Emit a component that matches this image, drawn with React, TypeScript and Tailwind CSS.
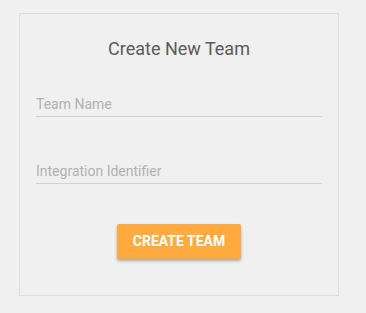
import React, { useState } from 'react';

const App: React.FC = () => {
  const [name, setName] = useState('');
  const [ident, setIdent] = useState('');

  return (
    <div className="h-[313px] w-[366px] bg-[#f0f0f0] pl-[19px] pt-[13px] font-['Roboto',sans-serif]">
      <div className="flex h-[283px] w-[320px] flex-col border border-[#dcdcdc] px-4 pt-[23px]">
        <h2 className="text-center text-[18px] leading-6 text-[#5a5a5a]">Create New Team</h2>
        <input
          value={name}
          onChange={(e) => setName(e.target.value)}
          placeholder="Team Name"
          className="mt-[33px] h-[23px] w-full border-b border-[#d2d2d2] bg-transparent pb-[3px] text-[14px] leading-5 text-[#444] outline-none placeholder:text-[#b0b0b0]"
        />
        <input
          value={ident}
          onChange={(e) => setIdent(e.target.value)}
          placeholder="Integration Identifier"
          className="mt-[44px] h-[23px] w-full border-b border-[#d2d2d2] bg-transparent pb-[3px] text-[14px] leading-5 text-[#444] outline-none placeholder:text-[#b0b0b0]"
        />
        <div className="mt-[40px] flex justify-center">
          <button className="h-[35px] w-[124px] rounded-[2px] bg-[#ffab40] text-[14px] font-bold uppercase text-white shadow-[0_2px_3px_rgba(0,0,0,0.3)]">
            Create Team
          </button>
        </div>
      </div>
    </div>
  );
};

export default App;
